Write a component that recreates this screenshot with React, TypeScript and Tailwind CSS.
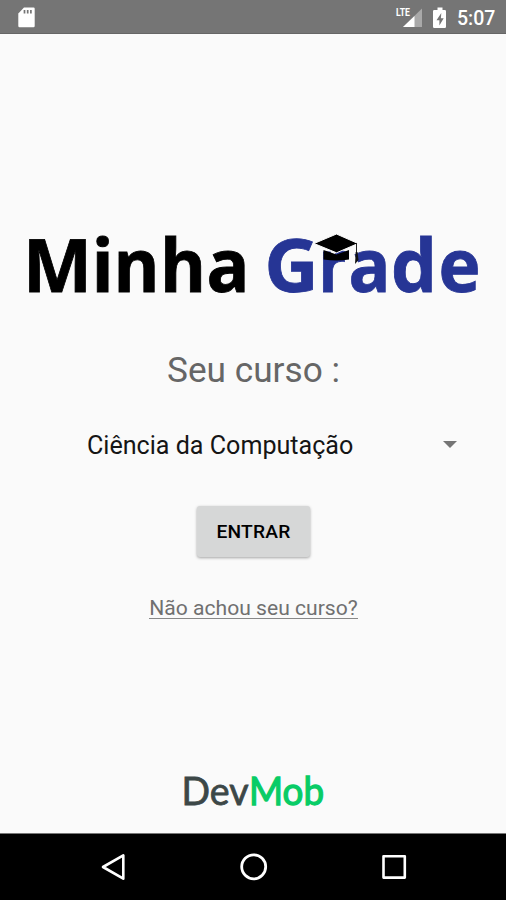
function StatusBar() {
  return (
    <header className="flex h-[34px] items-center justify-between border-b border-[#666] bg-[#757575] pl-[17px] pr-[11px]">
      <svg width="19" height="22" viewBox="0 0 19 22" aria-label="SD card">
        <path d="M7 1.5h9.5q1.2 0 1.2 1.2v17.3q0 1.2-1.2 1.2h-14q-1.2 0-1.2-1.2V7.5z" fill="#fff" />
        <path d="M7.5 4v3.5M10.7 4v3.5M13.9 4v3.5" stroke="#757575" strokeWidth="1.7" />
      </svg>
      <div className="flex items-center">
        <svg width="52" height="26" viewBox="0 -2 52 26" className="overflow-visible" aria-label="Signal and battery">
          <path d="M27 2.5V21H8z" fill="#a9a9a9" />
          <path d="M19.5 10V21H8z" fill="#fff" />
          <path d="M0 0h15v10.5H0z" fill="#757575" />
          <text x="1" y="10" textLength="14" lengthAdjust="spacingAndGlyphs" className="fill-white font-['Roboto',sans-serif] text-[11.5px] font-bold">LTE</text>
          <path d="M42.5 1.5h5v2.5h2.3q1.2 0 1.2 1.2v15.6q0 1.2-1.2 1.2H39.2q-1.2 0-1.2-1.2V5.2q0-1.2 1.2-1.2h3.3z" fill="#fff" />
          <path d="M46.3 7l-4.8 7.2h2.9v5.3l4.3-7.2h-2.8z" fill="#757575" />
        </svg>
        <span className="ml-[10px] mt-[4px] w-[38px] whitespace-nowrap text-[19.5px] font-medium leading-6 text-white">5:07</span>
      </div>
    </header>
  );
}

function Logo() {
  return (
    <svg width="506" height="120" viewBox="0 205 506 120" className="shrink-0 font-['Open_Sans','Noto_Sans',sans-serif] text-[73px] font-bold" role="img" aria-label="Minha Grade">
      <g fill="#000" stroke="#000" strokeWidth="0.8">
        <text y="292" x="23" textLength="69" lengthAdjust="spacingAndGlyphs">M</text>
        <text y="292" x="91.5">i</text>
        <text y="292" x="113.5" textLength="46" lengthAdjust="spacingAndGlyphs">n</text>
        <text y="292" x="160" textLength="46" lengthAdjust="spacingAndGlyphs">h</text>
        <text y="292" x="206.5" textLength="43" lengthAdjust="spacingAndGlyphs">a</text>
      </g>
      <g fill="#263595" stroke="#263595" strokeWidth="0.8">
        <text y="292" x="264.5" textLength="54" lengthAdjust="spacingAndGlyphs">G</text>
        <text y="292" x="318.5" textLength="28" lengthAdjust="spacingAndGlyphs">r</text>
        <text y="292" x="348.5" textLength="42" lengthAdjust="spacingAndGlyphs">a</text>
        <text y="292" x="391" textLength="46" lengthAdjust="spacingAndGlyphs">d</text>
        <text y="292" x="438.5" textLength="42" lengthAdjust="spacingAndGlyphs">e</text>
      </g>
      <path d="M323.5 250l13 4.5 12.5-4.5v9.5q-12 2-25.5 0z" fill="#000" />
      <path d="M314 243.5L336.5 234l21.5 9.5-21.5 9.3z" fill="#000" stroke="#fafafa" strokeWidth="1" />
      <path d="M356.5 243v10" stroke="#222" strokeWidth="1" />
      <path d="M355.7 252h1.8l1 8-3.5 4z" fill="#111" />
    </svg>
  );
}

function NavBar() {
  return (
    <nav className="flex h-[67px] items-center justify-between border-t border-[#777] bg-black pl-[99px] pr-[98px]">
      <svg width="28" height="32" viewBox="0 0 28 32" fill="none" stroke="#fff" strokeWidth="2.6" strokeLinejoin="round">
        <path d="M24.3 4.3v23.4L4 16z" />
      </svg>
      <svg width="30" height="32" viewBox="0 0 30 32" fill="none" stroke="#fff" strokeWidth="2.8">
        <circle cx="14.7" cy="15.8" r="12" />
      </svg>
      <svg width="28" height="32" viewBox="0 0 28 32" fill="none" stroke="#fff" strokeWidth="2.6" strokeLinejoin="round">
        <path d="M3.5 5.3h21.3v21.3H3.5z" />
      </svg>
    </nav>
  );
}

export default function App() {
  return (
    <div className="flex h-[900px] w-[506px] flex-col overflow-hidden bg-[#fafafa] font-['Roboto',sans-serif]">
      <StatusBar />
      <main className="flex flex-1 flex-col items-center pt-[171px]">
        <Logo />
        <h1 className="ml-[1px] mt-[24px] whitespace-nowrap text-[35.2px] leading-[42px] text-[#666]">Seu curso :</h1>
        <div className="mt-[38px] flex h-[32px] w-[374px] items-center justify-between pl-[21px]">
          <span className="mt-[2px] whitespace-nowrap text-[25.1px] leading-8 text-[#151515]">Ciência da Computação</span>
          <svg width="14" height="7" viewBox="0 0 14 7" className="-mr-[17px] -mt-[2px]">
            <path d="M0 0h14L7 7z" fill="#757575" />
          </svg>
        </div>
        <button className="mt-[45px] h-[51px] w-[113px] rounded-[3px] bg-[#d6d7d7] pl-[1px] pt-[2px] text-[19.2px] font-medium tracking-[0.2px] text-black shadow-[0_1px_3px_rgba(0,0,0,0.35)]">
          ENTRAR
        </button>
        <a className="ml-[1px] mt-[39px] whitespace-nowrap border-b border-[#888] pt-[1px] text-[21.1px] leading-[21px] text-[#707070]">Não achou seu curso?</a>
        <svg width="150" height="60" viewBox="178 760 150 60" className="mt-[141px] shrink-0 font-['Lato',sans-serif] text-[39px]" role="img" aria-label="DevMob">
          <text x="181.5" y="805" textLength="67" lengthAdjust="spacingAndGlyphs" fill="#3c4747" stroke="#3c4747" strokeWidth="0.8">Dev</text>
          <text x="249" y="805" textLength="75" lengthAdjust="spacingAndGlyphs" fill="#08cc66" stroke="#08cc66" strokeWidth="1.3">Mob</text>
        </svg>
      </main>
      <NavBar />
    </div>
  );
}
